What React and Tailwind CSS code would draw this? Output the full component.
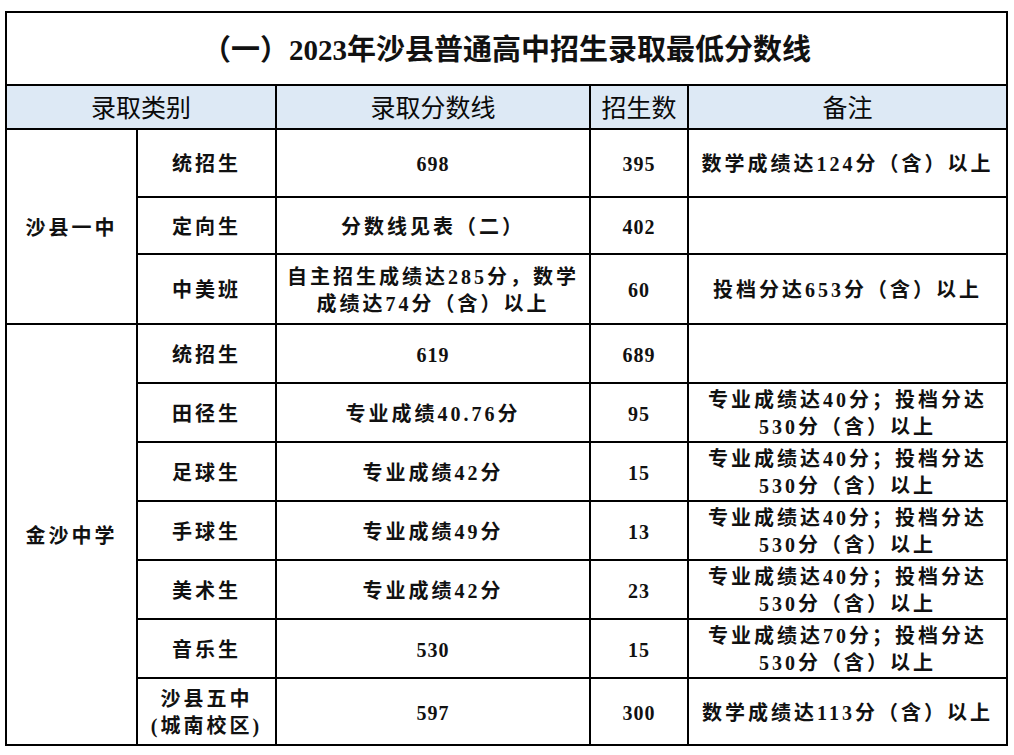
import React from "react";

const F = "font-['Liberation_Serif','Noto_Sans_CJK_SC',serif]";

function Cell({ children, className = "", ...rest }) {
  return (
    <td
      {...rest}
      className={
        "border-2 border-black text-center align-middle px-0 pb-0 pt-[3px] text-[20px] font-bold leading-[27px] text-[#111] " +
        className
      }
    >
      {children}
    </td>
  );
}

const rows1 = [
  { type: "统招生", score: "698", sd: true, num: "395", note: "数学成绩达124分（含）以上", h: "h-[68px]" },
  { type: "定向生", score: "分数线见表（二）", num: "402", note: "", h: "h-[57px]" },
  {
    type: "中美班",
    score: (
      <>
        自主招生成绩达285分，数学
        <br />
        成绩达74分（含）以上
      </>
    ),
    num: "60",
    note: "投档分达653分（含）以上",
    h: "h-[70px]",
  },
];

const twoLine = (a) => (
  <>
    专业成绩达{a}分；投档分达
    <br />
    530分（含）以上
  </>
);

const rows2 = [
  { type: "统招生", score: "619", sd: true, num: "689", note: "", h: "h-[59px]" },
  { type: "田径生", score: "专业成绩40.76分", num: "95", note: twoLine("40"), h: "h-[59px]" },
  { type: "足球生", score: "专业成绩42分", num: "15", note: twoLine("40"), h: "h-[59px]" },
  { type: "手球生", score: "专业成绩49分", num: "13", note: twoLine("40"), h: "h-[59px]" },
  { type: "美术生", score: "专业成绩42分", num: "23", note: twoLine("40"), h: "h-[59px]" },
  { type: "音乐生", score: "530", sd: true, num: "15", note: twoLine("70"), h: "h-[59px]" },
  {
    type: (
      <>
        沙县五中
        <br />
        (城南校区)
      </>
    ),
    score: "597",
    sd: true,
    num: "300",
    note: "数学成绩达113分（含）以上",
    h: "h-[67px]",
  },
];

const HEAD =
  "border-2 border-black text-center align-middle px-0 pb-0 pt-[3px] text-[25px] font-normal text-[#0a0a0a]";

export default function App() {
  return (
    <div className={"w-[1014px] h-[755px] bg-white pt-[11px] pl-[5px] " + F}>
      <table className="border-collapse table-fixed w-[1001px]">
        <colgroup>
          <col className="w-[131px]" />
          <col className="w-[139px]" />
          <col className="w-[314px]" />
          <col className="w-[98px]" />
          <col className="w-[319px]" />
        </colgroup>
        <tbody>
          <tr className="h-[73px]">
            <td
              colSpan={5}
              className="border-2 border-black text-center align-middle px-0 pb-0 pt-[4px] text-[29px] font-bold text-[#111] leading-none"
            >
              （一）2023年沙县普通高中招生录取最低分数线
            </td>
          </tr>
          <tr className="h-[44px] bg-[#dde9f5]">
            <td colSpan={2} className={HEAD}>
              录取类别
            </td>
            <td className={HEAD}>录取分数线</td>
            <td className={HEAD}>招生数</td>
            <td className={HEAD}>备注</td>
          </tr>
          {rows1.map((r, i) => (
            <tr key={"a" + i} className={r.h}>
              {i === 0 && (
                <Cell rowSpan={3} className="tracking-[3px]">
                  沙县一中
                </Cell>
              )}
              <Cell className="tracking-[3px]">{r.type}</Cell>
              <Cell className={r.sd ? "tracking-[1px]" : "tracking-[3px]"}>{r.score}</Cell>
              <Cell className="tracking-[1px]">{r.num}</Cell>
              <Cell className="tracking-[3px]">{r.note}</Cell>
            </tr>
          ))}
          {rows2.map((r, i) => (
            <tr key={"b" + i} className={r.h}>
              {i === 0 && (
                <Cell rowSpan={7} className="tracking-[3px]">
                  金沙中学
                </Cell>
              )}
              <Cell className="tracking-[3px]">{r.type}</Cell>
              <Cell className={r.sd ? "tracking-[1px]" : "tracking-[3px]"}>{r.score}</Cell>
              <Cell className="tracking-[1px]">{r.num}</Cell>
              <Cell className="tracking-[3px]">{r.note}</Cell>
            </tr>
          ))}
        </tbody>
      </table>
    </div>
  );
}
